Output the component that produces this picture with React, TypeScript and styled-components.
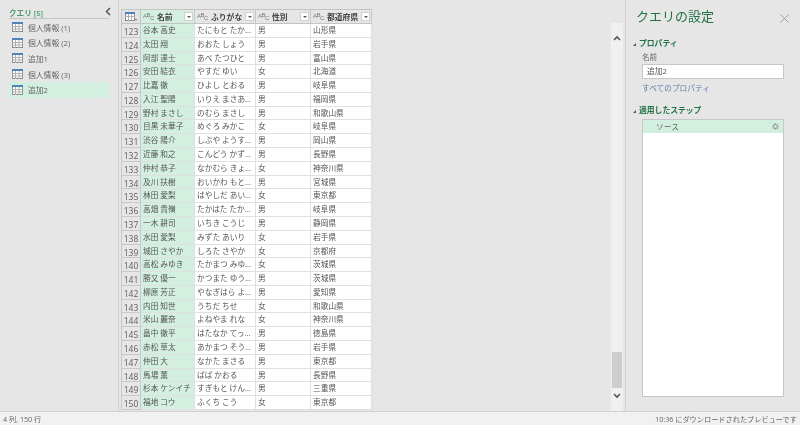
import React from 'react';
import styled, { createGlobalStyle } from 'styled-components';

const Global = createGlobalStyle`
  html, body { margin: 0; padding: 0; background: #e6e6e6; overflow: hidden; }
  body { font-family: "Open Sans", "Noto Sans CJK JP", sans-serif; color: #505050; }
`;

const GREEN = '#217346';
const Page = styled.div`
  width: 800px; height: 425px; display: flex; flex-direction: column; background: #e6e6e6; filter: blur(0.3px);
`;
const Main = styled.div`display: flex; flex: 1; min-height: 0;`;
const Sidebar = styled.aside`
  width: 119px; box-sizing: border-box; border-right: 1px solid #d0d0d0; padding: 8px 10px 0 9px;
`;
const SideHead = styled.div`
  display: flex; align-items: center; justify-content: space-between; height: 10px;
  border-bottom: 1px solid #c6c6c6; margin-bottom: 1px; width: 100px;
`;
const SideTitle = styled.span`font-size: 7.6px; line-height: 10px; color: #4f9a72; font-weight: 600;`;
const Collapse = styled.svg`width: 6px; height: 9px; margin-top: -3px; margin-right: -2px;`;
const QueryList = styled.div`display: flex; flex-direction: column;`;
const QueryRow = styled.div<{ $active?: boolean }>`
  display: flex; align-items: center; height: 15.6px; gap: 5px; padding: 0 0 1px 3px; width: 100px; box-sizing: border-box;
  background: ${p => (p.$active ? '#d3efe0' : 'transparent')};
  font-size: 7.8px; color: #666;
`;
const Center = styled.section`
  flex: 1; min-width: 0; display: flex; padding: 9px 2px 0 2px; box-sizing: border-box;
`;
const TableArea = styled.div`flex: 1; min-width: 0;`;
const Grid = styled.div`
  width: 251px; display: grid; grid-template-columns: 20px 54px 61px 55px 61px;
  grid-template-rows: 15px repeat(28, 13.79px); background: #fff;
`;
const Corner = styled.div`
  background: #e2e2e2; border: 1px solid #c4c4c4; box-sizing: border-box; display: flex; align-items: center; justify-content: center;
`;
const Head = styled.div<{ $sel?: boolean }>`
  background: ${p => (p.$sel ? '#d3efe0' : '#e6e6e6')}; border-top: 1px solid #c4c4c4; border-right: 1px solid #c8c8c8; border-bottom: 1px solid #c4c4c4;
  box-sizing: border-box; display: flex; align-items: center; padding: 0 1px 0 2px; font-size: 7.8px; font-weight: 700; color: #444; white-space: nowrap;
`;
const TypeIcon = styled.span`
  display: inline-flex; align-items: center; width: 13px; flex: none; font: 6px/8px "Liberation Sans", sans-serif; color: #777; letter-spacing: -0.5px;
`;
const Shift = styled.span<{ $y: number }>`position: relative; top: ${p => p.$y}px;`;
const HeadLabel = styled.span`flex: 1; padding-left: 1px; overflow: hidden;`;
const Drop = styled.span`
  width: 9px; height: 9px; flex: none; background: #fff; border: 1px solid #d0d0d0; box-sizing: border-box; display: flex; align-items: center; justify-content: center;
  &::after { content: ''; border-left: 2px solid transparent; border-right: 2px solid transparent; border-top: 2px solid #555; }
`;
const RowNum = styled.div`
  background: #e6e6e6; border: 1px solid #c8c8c8; border-top: 0; box-sizing: border-box; font: 8.5px/13px "Open Sans", sans-serif; text-align: center; color: #5c5c5c; padding-top: 1px;
`;
const Cell = styled.div<{ $sel?: boolean }>`
  background: ${p => (p.$sel ? '#d3efe0' : '#fff')}; border-right: 1px solid #e0e0e0; border-bottom: 1px solid #e0e0e0; box-sizing: border-box;
  font-size: 7.7px; line-height: 13px; padding-left: 2px; white-space: nowrap; overflow: hidden; color: #555;
`;
const ScrollTrack = styled.div`
  width: 12px; flex: none; margin-top: 14px; background: #f0f0f0; display: flex; flex-direction: column; align-items: center; height: 388px;
`;
const ScrollBtn = styled.svg<{ $down?: boolean }>`
  width: 8px; height: 6px; flex: none;
  margin: ${p => (p.$down ? '5px 0 12px' : '12px 0 4px')};
`;
const ScrollBody = styled.div`flex: 1; width: 100%; display: flex; flex-direction: column; justify-content: flex-end;`;
const Thumb = styled.div`height: 36px; background: #cdcdcd; margin: 0 1px;`;
const Panel = styled.aside`
  width: 175px; flex: none; box-sizing: border-box; border-left: 1px solid #d0d0d0; padding: 5px 16px 14px 7px; display: flex; flex-direction: column;
`;
const PanelHead = styled.div`
  display: flex; align-items: center; justify-content: space-between; height: 22px; margin: 0 -5px 10px 3px;
`;
const PanelTitle = styled.h2`margin: 0; font-size: 13px; line-height: 22px; font-weight: 400; color: ${GREEN};`;
const CloseIcon = styled.svg`width: 9px; height: 9px; margin-top: 4px;`;
const Section = styled.div`display: flex; align-items: center; gap: 3px; font-size: 7.8px; line-height: 12px; font-weight: 700; color: ${GREEN};`;
const Tri = styled.span`
  width: 0; height: 0; border-left: 3px solid transparent; border-bottom: 3px solid #555; margin-top: 2px;
`;
const Indented = styled.div<{ $grow?: boolean }>`
  padding-left: 9px; display: flex; flex-direction: column; min-height: 0;
  flex: ${p => (p.$grow ? '1' : 'none')};
`;
const FieldLabel = styled.div`font-size: 7.6px; line-height: 12px; color: #666; margin-top: 2px;`;
const NameInput = styled.div`
  height: 15px; box-sizing: border-box; background: #fff; border: 1px solid #c6c6c6; font-size: 7.8px; line-height: 13px; padding-left: 4px; margin-top: 1px; color: #555;
`;
const PropLink = styled.div`font-size: 7.7px; line-height: 12px; color: #5a7fae; margin: 3px 0 10px 0;`;
const StepBox = styled.div`flex: 1; min-height: 0; background: #fff; border: 1px solid #c6c6c6; margin-top: 3px; box-sizing: border-box;`;
const StepRow = styled.div`
  height: 13px; background: #d3efe0; display: flex; align-items: center; justify-content: space-between; padding: 0 4px 0 13px; font-size: 7.8px; color: #666;
`;
const GearIcon = styled.svg`width: 7px; height: 7px;`;
const Status = styled.footer`
  height: 14px; flex: none; background: #f1f1f1; border-top: 1px solid #d2d2d2; box-sizing: border-box; display: flex; justify-content: space-between; align-items: center;
  padding: 0 3px 0 3px; font-size: 7.2px; color: #666; white-space: nowrap;
`;
const TableSvg = styled.svg`flex: none;`;

const TableGlyph = () => (
  <TableSvg width="11" height="10" viewBox="0 0 11 10">
    <rect x="0.5" y="0.5" width="10" height="9" fill="#fff" stroke="#8a8a8a" />
    <rect x="0" y="0" width="11" height="2" fill="#4f81bd" />
    <path d="M0 4.5H11M0 7H11M3.5 2V10M7 2V10" stroke="#b0b0b0" strokeWidth="1" />
  </TableSvg>
);

const data: [number, string, string, string, string][] = [
  [123, '谷本 高史', 'たにもと たか…', '男', '山形県'],
  [124, '太田 翔', 'おおた しょう', '男', '岩手県'],
  [125, '阿部 達士', 'あべ たつひと', '男', '富山県'],
  [126, '安田 結衣', 'やすだ ゆい', '女', '北海道'],
  [127, '比嘉 徹', 'ひよし とおる', '男', '岐阜県'],
  [128, '入江 聖陽', 'いりえ まさあ…', '男', '福岡県'],
  [129, '野村 まさし', 'のむら まさし', '男', '和歌山県'],
  [130, '目黒 未華子', 'めぐろ みかこ', '女', '岐阜県'],
  [131, '渋谷 陽介', 'しぶや ようす…', '男', '岡山県'],
  [132, '近藤 和之', 'こんどう かず…', '男', '長野県'],
  [133, '仲村 恭子', 'なかむら きょ…', '女', '神奈川県'],
  [134, '及川 扶樹', 'おいかわ もと…', '男', '宮城県'],
  [135, '林田 愛梨', 'はやしだ あい…', '女', '東京都'],
  [136, '高畑 貴嶺', 'たかはた たか…', '男', '岐阜県'],
  [137, '一木 耕司', 'いちき こうじ', '男', '静岡県'],
  [138, '水田 愛梨', 'みずた あいり', '女', '岩手県'],
  [139, '城田 さやか', 'しろた さやか', '女', '京都府'],
  [140, '高松 みゆき', 'たかまつ みゆ…', '女', '茨城県'],
  [141, '勝又 優一', 'かつまた ゆう…', '男', '茨城県'],
  [142, '柳原 芳正', 'やなぎはら よ…', '男', '愛知県'],
  [143, '内田 知世', 'うちだ ちせ', '女', '和歌山県'],
  [144, '米山 麗奈', 'よねやま れな', '女', '神奈川県'],
  [145, '畠中 徹平', 'はたなか てっ…', '男', '徳島県'],
  [146, '赤松 草太', 'あかまつ そう…', '男', '岩手県'],
  [147, '仲田 大', 'なかた まさる', '男', '東京都'],
  [148, '馬場 薫', 'ばば かおる', '男', '長野県'],
  [149, '杉本 ケンイチ', 'すぎもと けん…', '男', '三重県'],
  [150, '福地 コウ', 'ふくち こう', '女', '東京都'],
];

const queries = ['個人情報 (1)', '個人情報 (2)', '追加1', '個人情報 (3)', '追加2'];
const headers = ['名前', 'ふりがな', '性別', '都道府県'];

export default function App() {
  return (
    <Page>
      <Global />
      <Main>
        <Sidebar>
          <SideHead>
            <SideTitle>クエリ [5]</SideTitle>
            <Collapse viewBox="0 0 6 9"><path d="M5 1L1.5 4.5L5 8" fill="none" stroke="#555" strokeWidth="1.5" /></Collapse>
          </SideHead>
          <QueryList>
            {queries.map((q, i) => (
              <QueryRow key={q} $active={i === 4}><TableGlyph />{q}</QueryRow>
            ))}
          </QueryList>
        </Sidebar>
        <Center>
          <TableArea>
            <Grid>
              <Corner>
                <svg width="12" height="9" viewBox="0 0 12 9">
                  <rect x="0.5" y="0.5" width="9" height="8" fill="#fff" stroke="#8a8a8a" />
                  <rect x="0" y="0" width="10" height="2" fill="#4f81bd" />
                  <path d="M0 4.5H10M3.5 2V9M6.5 2V9" stroke="#b0b0b0" />
                  <path d="M10 7h2l-1 1.5z" fill="#555" />
                </svg>
              </Corner>
              {headers.map((h, i) => (
                <Head key={h} $sel={i === 0}>
                  <TypeIcon>
                    <Shift $y={-1}>A</Shift><Shift $y={-2}>B</Shift><Shift $y={1}>C</Shift>
                  </TypeIcon>
                  <HeadLabel>{h}</HeadLabel>
                  <Drop />
                </Head>
              ))}
              {data.map(r => (
                <React.Fragment key={r[0]}>
                  <RowNum>{r[0]}</RowNum>
                  <Cell $sel>{r[1]}</Cell>
                  <Cell>{r[2]}</Cell>
                  <Cell>{r[3]}</Cell>
                  <Cell>{r[4]}</Cell>
                </React.Fragment>
              ))}
            </Grid>
          </TableArea>
          <ScrollTrack>
            <ScrollBtn viewBox="0 0 8 6"><path d="M1 5L4 2L7 5" fill="none" stroke="#555" strokeWidth="1.6" /></ScrollBtn>
            <ScrollBody><Thumb /></ScrollBody>
            <ScrollBtn $down viewBox="0 0 8 6"><path d="M1 1L4 4L7 1" fill="none" stroke="#555" strokeWidth="1.6" /></ScrollBtn>
          </ScrollTrack>
        </Center>
        <Panel>
          <PanelHead>
            <PanelTitle>クエリの設定</PanelTitle>
            <CloseIcon viewBox="0 0 9 9"><path d="M0.5 0.5L8.5 8.5M8.5 0.5L0.5 8.5" stroke="#999" strokeWidth="0.9" /></CloseIcon>
          </PanelHead>
          <Section><Tri />プロパティ</Section>
          <Indented>
            <FieldLabel>名前</FieldLabel>
            <NameInput>追加2</NameInput>
            <PropLink>すべてのプロパティ</PropLink>
          </Indented>
          <Section><Tri />適用したステップ</Section>
          <Indented $grow>
            <StepBox>
              <StepRow>
                ソース
                <GearIcon viewBox="0 0 8 8">
                  <circle cx="4" cy="4" r="2.2" fill="none" stroke="#999" strokeWidth="1.2" />
                  <path d="M4 0V1.5M4 6.5V8M0 4H1.5M6.5 4H8M1.2 1.2L2.2 2.2M5.8 5.8L6.8 6.8M6.8 1.2L5.8 2.2M2.2 5.8L1.2 6.8" stroke="#999" />
                </GearIcon>
              </StepRow>
            </StepBox>
          </Indented>
        </Panel>
      </Main>
      <Status>
        <span>4 列, 150 行</span>
        <span>10:36 にダウンロードされたプレビューです</span>
      </Status>
    </Page>
  );
}
